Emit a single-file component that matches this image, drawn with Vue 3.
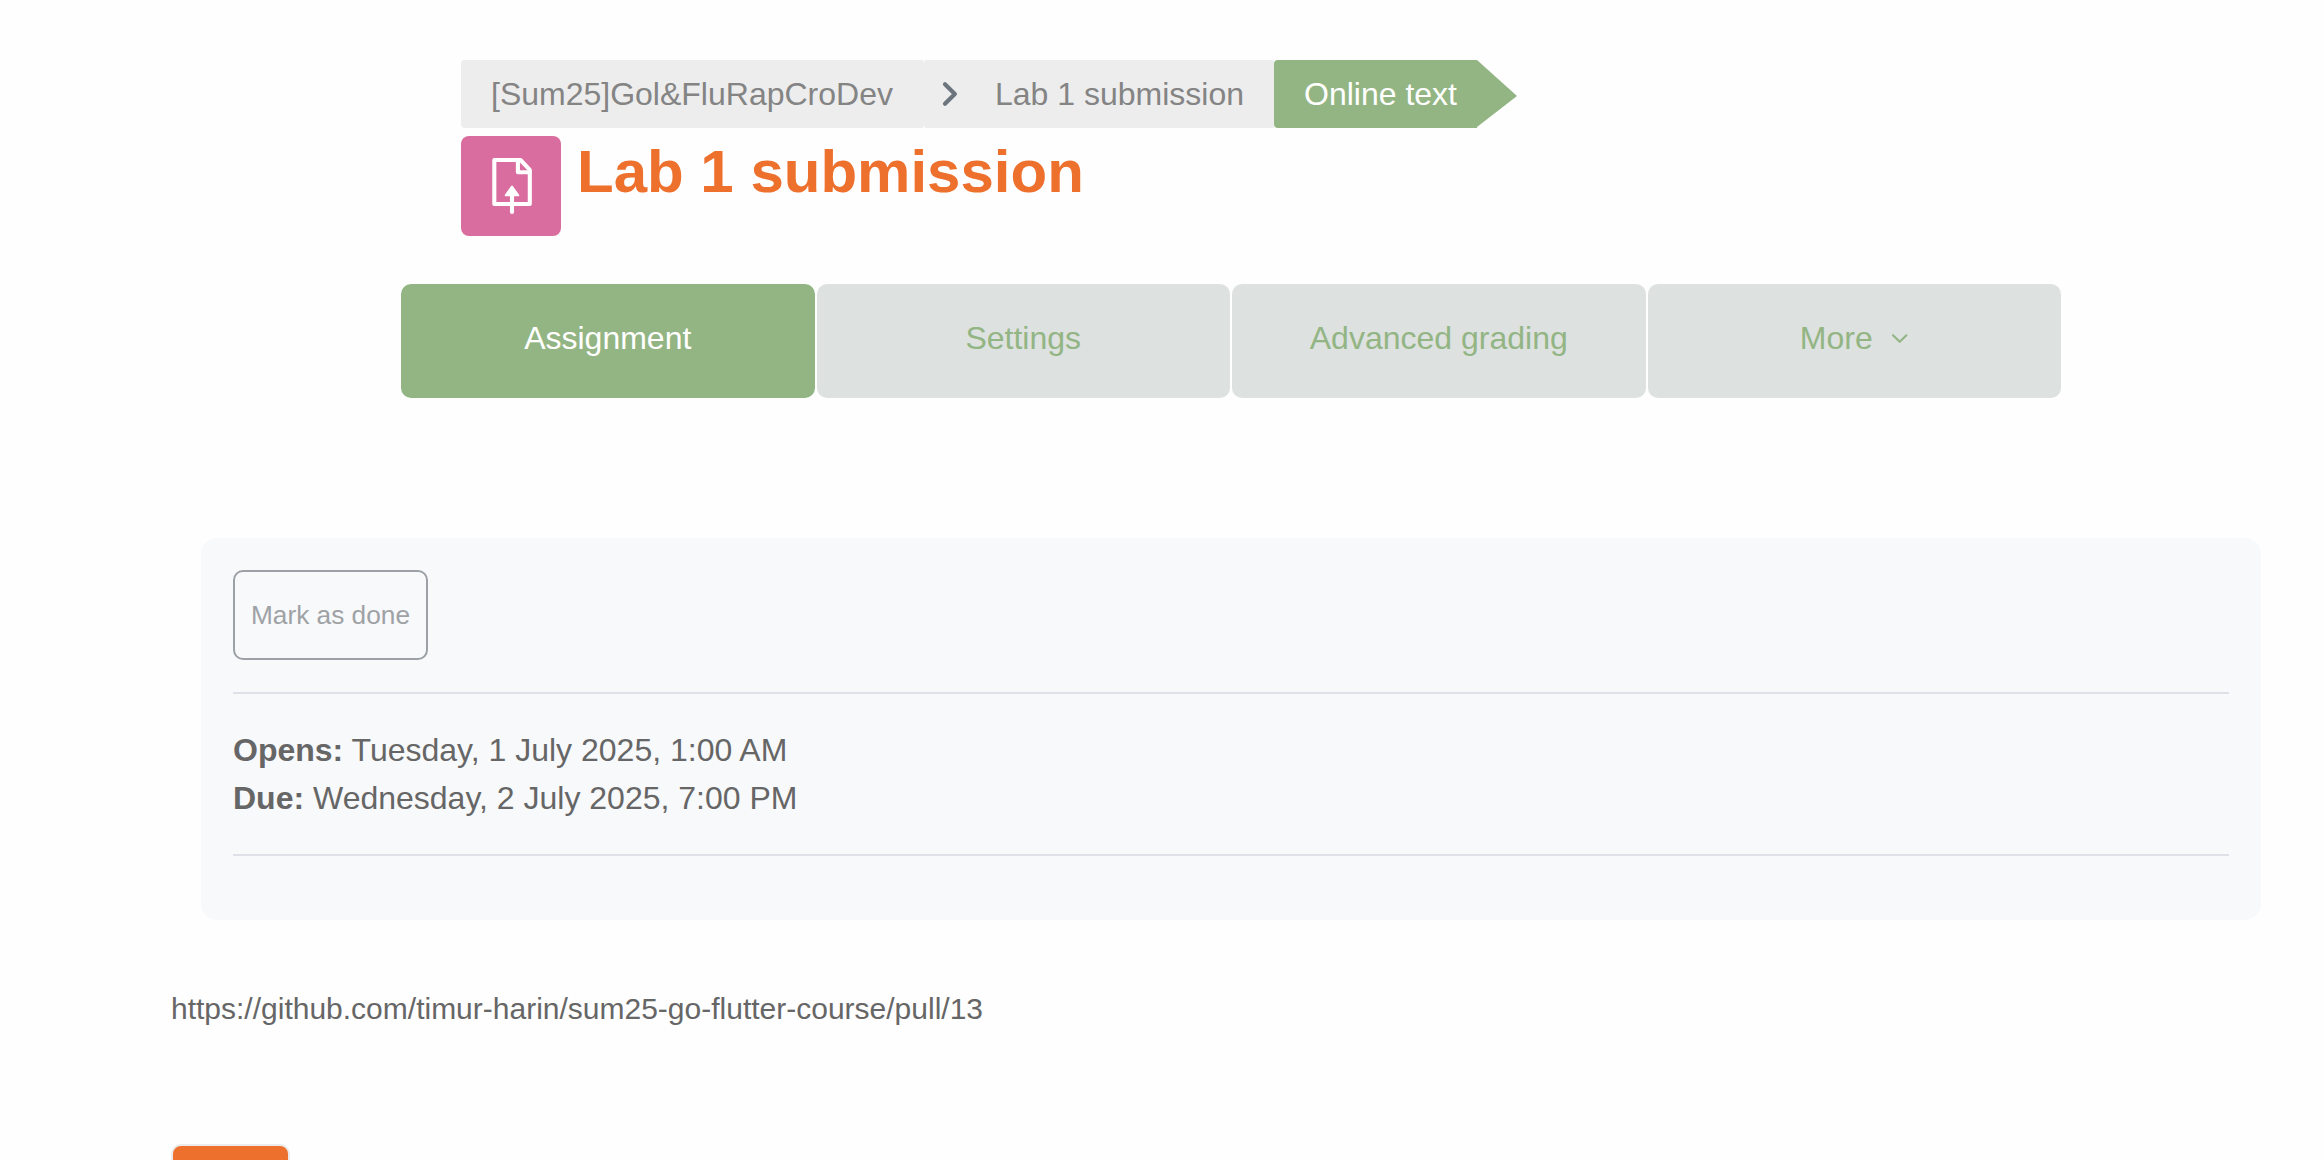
<script setup>
const tabs = [
  { label: 'Assignment', active: true },
  { label: 'Settings' },
  { label: 'Advanced grading' },
  { label: 'More', menu: true },
]

const dates = [
  { label: 'Opens:', value: 'Tuesday, 1 July 2025, 1:00 AM' },
  { label: 'Due:', value: 'Wednesday, 2 July 2025, 7:00 PM' },
]
</script>

<template>
  <div class="page">
    <header class="header">
      <nav class="breadcrumb">
        <a class="crumb">[Sum25]Gol&amp;FluRapCroDev</a>
        <a class="crumb crumb-next">
          <svg class="crumb-arrow" width="16" height="26" viewBox="0 0 16 26">
            <path d="M3 3.2 L12.9 13 L3 22.8" fill="none" stroke="#6c757d" stroke-width="4.2" stroke-linecap="round" stroke-linejoin="round" />
          </svg>
          <span>Lab 1 submission</span>
        </a>
        <span class="crumb crumb-current">Online text</span>
        <span class="crumb-tip"></span>
      </nav>
      <div class="title-row">
        <div class="activity-icon">
          <svg width="100" height="100" viewBox="0 0 100 100">
            <g fill="none" stroke="#fff" stroke-width="4.1" stroke-linejoin="round" stroke-linecap="round">
              <path d="M33.3 24 H59.5 L68.8 33.8 V68 H33.3 Z" />
              <path d="M56.9 24 V36.3 H68.8" />
              <path d="M51 58 V76" />
            </g>
            <path d="M51 50.5 L57.3 59.3 H44.7 Z" fill="#fff" stroke="#fff" stroke-width="2" stroke-linejoin="round" />
          </svg>
        </div>
        <h1 class="title">Lab 1 submission</h1>
      </div>
    </header>

    <nav class="tabs">
      <a v-for="tab in tabs" :key="tab.label" class="tab" :class="{ active: tab.active }">
        <span>{{ tab.label }}</span>
        <svg v-if="tab.menu" class="tab-arrow" width="18" height="12" viewBox="0 0 18 12">
          <path d="M2 2.3 L8.7 8.8 L15.4 2.3" fill="none" stroke="currentColor" stroke-width="2.1" stroke-linecap="round" stroke-linejoin="round" />
        </svg>
      </a>
    </nav>

    <section class="activity">
      <button class="done" type="button">Mark as done</button>
      <div class="dates">
        <div v-for="date in dates" :key="date.label">
          <strong>{{ date.label }}</strong> {{ date.value }}
        </div>
      </div>
    </section>

    <p class="submission">https://github.com/timur-harin/sum25-go-flutter-course/pull/13</p>
    <button class="action" type="button" aria-label="Back"></button>
  </div>
</template>

<style>
body {
  margin: 0;
  background: #fff;
}
</style>

<style scoped>
.page {
  box-sizing: border-box;
  width: 2324px;
  height: 1160px;
  overflow: hidden;
  padding-top: 60px;
  background: #fefefe;
  color: #666;
  font-family: "Liberation Sans", Arial, sans-serif;
  font-size: 32px;
  line-height: 48px;
}

.header {
  margin-left: 461px;
}

.breadcrumb {
  display: flex;
  height: 68px;
  color: #848484;
}

.crumb {
  box-sizing: border-box;
  display: flex;
  align-items: center;
  height: 68px;
  padding: 0 30px;
  border-radius: 4px 0 0 4px;
  background: #ededed;
  white-space: nowrap;
}

.crumb:first-child {
  width: 462px;
}

.crumb-next {
  width: 351px;
  padding-left: 19px;
}

.crumb-arrow {
  margin-right: 37px;
}

.crumb-current {
  width: 203px;
  background: #93b584;
  color: #fff;
}

.crumb-tip {
  width: 0;
  height: 0;
  border-top: 36px solid transparent;
  border-bottom: 31px solid transparent;
  border-left: 40px solid #93b584;
}

.title-row {
  display: flex;
  align-items: flex-start;
  gap: 16px;
  margin-top: 8px;
}

.activity-icon {
  width: 100px;
  height: 100px;
  border-radius: 8px;
  background: #da6d9f;
}

.activity-icon svg {
  display: block;
}

.title {
  margin: 0;
  color: #ee702d;
  font-size: 60px;
  line-height: 72px;
  font-weight: 700;
}

.tabs {
  display: flex;
  gap: 2px;
  width: 1660px;
  margin: 48px 0 0 401px;
}

.tab {
  box-sizing: border-box;
  display: flex;
  flex: 1 1 0;
  justify-content: center;
  height: 114px;
  padding-top: 30px;
  border-radius: 10px;
  background: #dde1e0;
  color: #93b584;
}

.tab.active {
  background: #93b584;
  color: #fff;
}

.tab-arrow {
  margin: 19px 0 0 18px;
}

.activity {
  box-sizing: border-box;
  width: 2060px;
  height: 382px;
  margin: 140px 0 0 201px;
  padding: 32px;
  border-radius: 16px;
  background: #f8f9fb;
}

.done {
  box-sizing: border-box;
  display: block;
  width: 195px;
  height: 90px;
  padding: 0;
  border: 2px solid #9ba1a7;
  border-radius: 10px;
  background: transparent;
  color: #9fa2a5;
  font-family: inherit;
  font-size: 26.25px;
  white-space: nowrap;
}

.dates {
  margin-top: 32px;
  padding: 32px 0;
  border-top: 2px solid #dfe1e8;
  border-bottom: 2px solid #dfe1e8;
}

.submission {
  margin: 66px 0 0 171px;
  font-size: 30px;
  line-height: 45px;
}

.action {
  box-sizing: border-box;
  display: block;
  width: 119px;
  height: 80px;
  margin: 113px 0 0 171px;
  border: 2px solid #ebebeb;
  border-radius: 10px;
  background: #ee702d;
}
</style>
